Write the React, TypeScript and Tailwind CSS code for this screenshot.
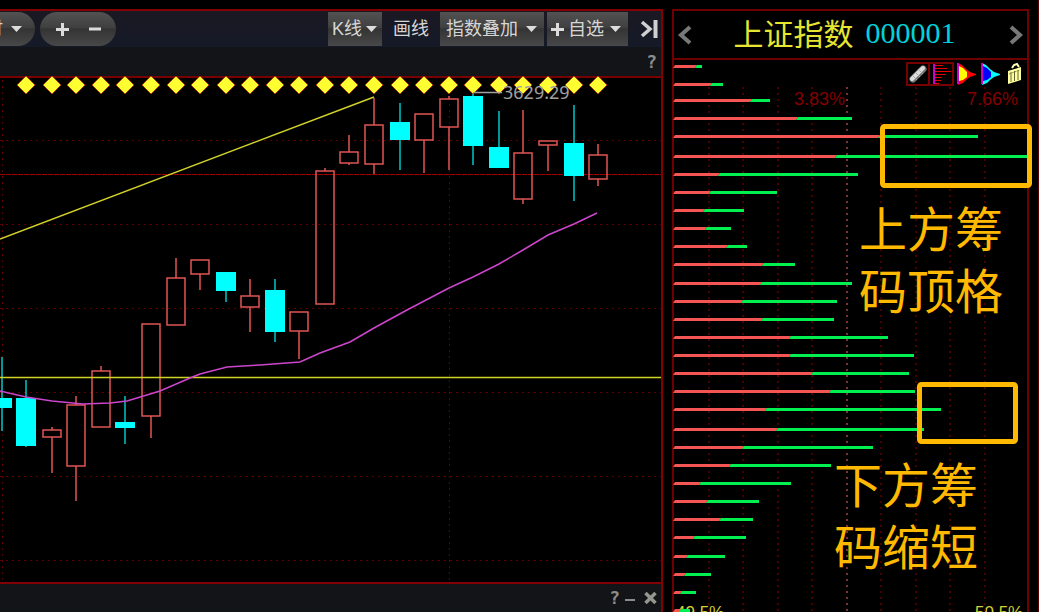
import { clsx } from "clsx";
import type { ReactNode } from "react";

type Candle = {
  x: number;
  top: number;
  bottom: number;
  high: number;
  low: number;
  up: boolean;
};

// x, body top, body bottom, high, low, rising
const candleRows: [number, number, number, number, number, boolean][] = [
  [2, 398, 408, 357, 431, false],
  [26, 398, 446, 380, 447, false],
  [52, 430, 437, 427, 473, true],
  [76, 405, 466, 396, 501, true],
  [101, 371, 427, 366, 427, true],
  [125, 422, 428, 396, 444, false],
  [151, 324, 416, 324, 438, true],
  [176, 278, 325, 258, 325, true],
  [200, 260, 274, 260, 290, true],
  [226, 272, 291, 272, 302, false],
  [250, 296, 307, 279, 332, true],
  [275, 290, 332, 279, 342, false],
  [299, 312, 331, 312, 359, true],
  [325, 171, 304, 168, 304, true],
  [349, 152, 163, 135, 165, true],
  [374, 125, 164, 98, 174, true],
  [400, 122, 140, 103, 170, false],
  [424, 114, 140, 114, 173, true],
  [449, 99, 127, 96, 170, true],
  [473, 96, 146, 92, 165, false],
  [499, 147, 168, 111, 168, false],
  [523, 153, 199, 110, 204, true],
  [548, 141, 145, 141, 171, true],
  [574, 143, 176, 105, 201, false],
  [598, 155, 179, 144, 186, true],
];

const candles: Candle[] = candleRows.map(([x, top, bottom, high, low, up]) => ({
  x, top, bottom, high, low, up,
}));

const average =
  "0,391 26,397 52,401 83,404 110,403 127,401 160,391 190,378 200,374 227,367 260,365 300,362 320,353 350,342 374,328 407,310 449,288 473,277 499,264 523,250 548,235 574,224 597,213";

// y, end of the profit part, end of the bar
const chips: [number, number, number][] = [
  [66, 696, 702],
  [84, 711, 723],
  [100, 751, 770],
  [118, 797, 852],
  [136, 879, 978],
  [156, 836, 1027],
  [174, 719, 858],
  [192, 710, 777],
  [210, 704, 744],
  [228, 706, 731],
  [246, 727, 747],
  [264, 763, 795],
  [283, 761, 852],
  [301, 742, 837],
  [319, 762, 834],
  [337, 790, 888],
  [355, 790, 914],
  [373, 812, 909],
  [391, 830, 915],
  [409, 766, 941],
  [429, 777, 924],
  [447, 743, 873],
  [465, 730, 831],
  [483, 700, 791],
  [501, 707, 759],
  [519, 720, 753],
  [537, 694, 746],
  [556, 687, 725],
  [574, 685, 711],
  [592, 681, 696],
  [610, 680, 690],
];

const chipGrid = [709, 743, 778, 812, 847, 881, 916, 950, 985];

const face = "bg-[linear-gradient(#525252,#404040_45%,#343434_50%,#484848)]";

const Caret = () => (
  <svg width="12" height="6" viewBox="0 0 12 6" className="shrink-0" aria-hidden="true">
    <path d="M0 0h11L5.500 6z" fill="#dcdcdc" />
  </svg>
);

const Plus = () => (
  <svg width="13" height="13" viewBox="0 0 13 13" className="shrink-0" aria-hidden="true">
    <path d="M6.500 0v13M0 6.500h13" stroke="#dcdcdc" strokeWidth="3" />
  </svg>
);

const ToolButton = ({ children, plain }: { children: ReactNode; plain?: boolean }) => (
  <button
    type="button"
    className={clsx("flex h-[34px] shrink-0 items-center gap-1 whitespace-nowrap text-lg leading-none", plain ? "px-2" : `px-1 ${face}`)}
  >
    {children}
  </button>
);

const Toolbar = () => (
  <div className="flex h-9 items-center bg-linear-to-b from-[#1a1822] to-[#151a28] text-[#d6d6d6]">
    <button type="button" className={clsx("flex h-[34px] w-[35px] items-center justify-end gap-2 rounded-r-full pr-3 text-lg leading-none whitespace-nowrap", face)}>
      <span>时</span>
      <Caret />
    </button>
    <div className={clsx("ml-[5px] flex h-[34px] w-[76px] items-center justify-center gap-5 rounded-full", face)}>
      <button type="button" aria-label="放大">
        <Plus />
      </button>
      <button type="button" aria-label="缩小">
        <svg width="12" height="12" viewBox="0 0 12 12">
          <path d="M0 6h12" stroke="#dcdcdc" strokeWidth="3" />
        </svg>
      </button>
    </div>
    <div className="ml-auto flex items-center gap-[3px]">
      <ToolButton>
        <span>K线</span>
        <Caret />
      </ToolButton>
      <ToolButton plain>画线</ToolButton>
      <ToolButton>
        <span className="px-[2px]">指数叠加</span>
        <span className="px-[2px]"><Caret /></span>
      </ToolButton>
      <ToolButton>
        <Plus />
        <span>自选</span>
        <span className="px-[2px]"><Caret /></span>
      </ToolButton>
    </div>
    <button type="button" aria-label="收起侧栏" className="ml-3 mr-[2px]">
      <svg width="19" height="20" viewBox="0 0 19 20" fill="none" stroke="#d0d0d0">
        <path d="M2 3l8 7-8 7" strokeWidth="3.500" />
        <path d="M15.500 1v18" strokeWidth="4" />
      </svg>
    </button>
  </div>
);

const CandleChart = () => (
  <svg viewBox="0 78 661 504" className="block w-full overflow-visible" role="img" aria-label="K线图">
    <g stroke="#5c0000" strokeDasharray="2 4">
      {[140, 224, 308, 392, 476, 560].map((y) => (
        <path key={y} d={`M0 ${y + 0.5}H661`} />
      ))}
      <path d="M2.500 80V582M449.500 80V582" />
    </g>
    <path d="M0 174.500H661" stroke="#a00000" strokeDasharray="5 1" />

    {candles.map((c) => (
      <g key={c.x} stroke={c.up ? "#e05656" : "#00c8c8"} strokeWidth="1.500">
        <path d={`M${c.x} ${c.high}V${c.top}M${c.x} ${c.bottom}V${c.low}`} />
        {c.up ? (
          <rect x={c.x - 9} y={c.top} width="18" height={c.bottom - c.top} fill="none" />
        ) : (
          <rect x={c.x - 10} y={c.top} width="20" height={c.bottom - c.top} fill="#00ffff" stroke="none" />
        )}
      </g>
    ))}

    <path d="M0 377.500H661" stroke="#d2d228" strokeWidth="1.500" />
    <path d="M0 239L374 97" stroke="#d2d228" strokeWidth="1.500" />
    <polyline points={average} fill="none" stroke="#cc46cc" strokeWidth="1.500" />

    {candles.slice(1).map((c) => (
      <path key={c.x} d={`M${c.x} 76l9 9-9 9-9-9z`} fill="#ffff32" stroke="#b42800" strokeWidth="0.800" />
    ))}
    <path d="M473 92.500H502" stroke="#a0a0a0" strokeWidth="1.500" />
    <text x="503" y="99" fill="#a0a0a0" className="font-['Noto_Sans'] text-lg">
      3629.29
    </text>
  </svg>
);

const Flag = ({ label, outer, inner }: { label: string; outer: string; inner: string }) => (
  <button type="button" aria-label={label} className="size-6">
    <svg viewBox="0 0 24 24" className="size-6">
      <path d="M4 1l4 2 4 4 4 3 6 2v1l-6 2-4 3-3 3-5 2z" fill={outer} />
      <path d="M5 4l4 2 4 4v5l-4 3-4 1z" fill={inner} />
      <path d="M4 1V22" stroke="#cc00cc" strokeWidth="2" />
    </svg>
  </button>
);

const ChipTools = () => (
  <div className="absolute top-[2px] right-[1px] flex">
    <button type="button" aria-label="设置" className="size-6 border-2 border-[#780000]">
      <svg viewBox="0 0 20 20" className="size-5">
        <path d="M5 15L15 5" stroke="#777" strokeWidth="7" strokeLinecap="round" />
        <path d="M4 15L15 4" stroke="#ddd" strokeWidth="4" strokeLinecap="round" />
        <path d="M5 12l4 4M8 9l4 4M11 6l4 4" stroke="#aaa" />
      </svg>
    </button>
    <button type="button" aria-label="筹码分布" className="size-6 border-2 border-l-0 border-[#780000]">
      <svg viewBox="0 0 22 20" className="h-5 w-[22px]">
        <path d="M4 0V20" stroke="#cc00cc" strokeWidth="2" />
        <path d="M5 1.500h8M5 4.500h12M5 7.500h16M5 10.500h10M5 13.500h7M5 16.500h6M5 19.500h4" stroke="#e60000" />
      </svg>
    </button>
    <Flag label="远期成本" outer="#ff0000" inner="#ffff00" />
    <Flag label="近期成本" outer="#00ffff" inner="#0000ff" />
    <button type="button" aria-label="说明" className="size-6">
      <svg viewBox="0 0 24 24" className="size-6">
        <path d="M6 9l13-4v13L6 22z" fill="#ffffa0" />
        <path d="M10 6l2-3 3-1 2 3" fill="none" stroke="#ffffb4" strokeWidth="2" />
        <path d="M9 10v10M12.500 9v10M16 8v10" stroke="#646432" />
        <path d="M7 12l11-4" stroke="#8c8c46" strokeDasharray="2 1" />
      </svg>
    </button>
  </div>
);

const ChipChart = () => (
  <div className="relative">
    <svg viewBox="674 60 353 552" className="block w-full overflow-visible" role="img" aria-label="筹码分布图">
      <g className="text-[17px]" fill="#d2d232">
        <text x="676" y="618">49.5%</text>
        <text x="975" y="618">50.5%</text>
      </g>
      {chipGrid.map((x) => (
        <path
          key={x}
          d={`M${x} 87V612`}
          stroke={x === 847 ? "#a04646" : "#640000"}
          strokeWidth="1.500"
          strokeDasharray="2 4"
        />
      ))}
      {chips.map(([y, mid, end]) => (
        <g key={y}>
          <path d={`M675 ${y - 1}H${mid + 1}l-2 3H673z`} fill="#f55555" />
          <path d={`M${mid + 1} ${y - 1}H${end}v3H${mid - 1}z`} fill="#00f050" />
        </g>
      ))}
      <g className="text-lg" fill="#820000">
        <text x="794" y="105">3.83%</text>
        <text x="967" y="105">7.66%</text>
      </g>

      <g fill="none" stroke="#ffb900" strokeWidth="5">
        <rect x="882.500" y="126.500" width="147" height="59" rx="2" />
        <rect x="919.500" y="384.500" width="96" height="57" rx="2" />
      </g>
      <g fill="#ffb900" className="text-5xl">
        <text x="859" y="247">上方筹</text>
        <text x="859" y="309">码顶格</text>
        <text x="834" y="503">下方筹</text>
        <text x="834" y="565">码缩短</text>
      </g>
    </svg>
    <ChipTools />
  </div>
);

const Chevron = ({ d, label }: { d: string; label: string }) => (
  <button type="button" aria-label={label}>
    <svg width="16" height="20" viewBox="0 0 16 20" fill="none" stroke="#787878" strokeWidth="4">
      <path d={d} />
    </svg>
  </button>
);

export default function App() {
  return (
    <div className="h-screen overflow-hidden border-r border-[#5a0000] bg-black pt-[9px] pr-[9px] font-['Liberation_Sans','Noto_Sans_CJK_SC',sans-serif]">
      <div className="flex h-full gap-[9px]">
        <main className="flex min-w-0 flex-1 flex-col border-t-2 border-r-2 border-[#820000]">
          <Toolbar />
          <div className="flex h-[31px] shrink-0 items-center justify-end border-b-2 border-[#780000] bg-[#131418] px-1 text-[#8c8c8c]">
            <button type="button" aria-label="帮助" className="font-['DejaVu_Sans_Mono'] text-lg leading-none font-bold">?</button>
          </div>
          <CandleChart />
          <div className="flex flex-1 items-center justify-end gap-1 border-t-2 border-[#820000] bg-[#131418] px-1 text-[#8c8c8c]">
            <button type="button" aria-label="帮助" className="font-['DejaVu_Sans_Mono'] text-lg leading-none font-bold">?</button>
            <button type="button" aria-label="最小化">
              <svg width="12" height="12" viewBox="0 0 12 12">
                <path d="M1 8h10" stroke="#8c8c8c" strokeWidth="2" />
              </svg>
            </button>
            <button type="button" aria-label="关闭" className="ml-1">
              <svg width="13" height="12" viewBox="0 0 13 12">
                <path d="M1.500 1l10 10M11.500 1l-10 10" stroke="#969690" strokeWidth="3.500" />
              </svg>
            </button>
          </div>
        </main>

        <aside className="w-[357px] shrink-0 border-x-2 border-t-2 border-[#6e0000]">
          <header className="flex h-[49px] items-center justify-between border-b-2 border-[#6e0000] px-[3px]">
            <Chevron label="上一个" d="M13 2L4 10l9 8" />
            <h1 className="flex items-center gap-3 pr-3 text-3xl">
              <span className="leading-none text-[#e6e632]">上证指数</span>
              <span className="pb-1 font-['Liberation_Serif'] leading-none text-[#00d2dc]">000001</span>
            </h1>
            <Chevron label="下一个" d="M3 2l9 8-9 8" />
          </header>
          <ChipChart />
        </aside>
      </div>
    </div>
  );
}
